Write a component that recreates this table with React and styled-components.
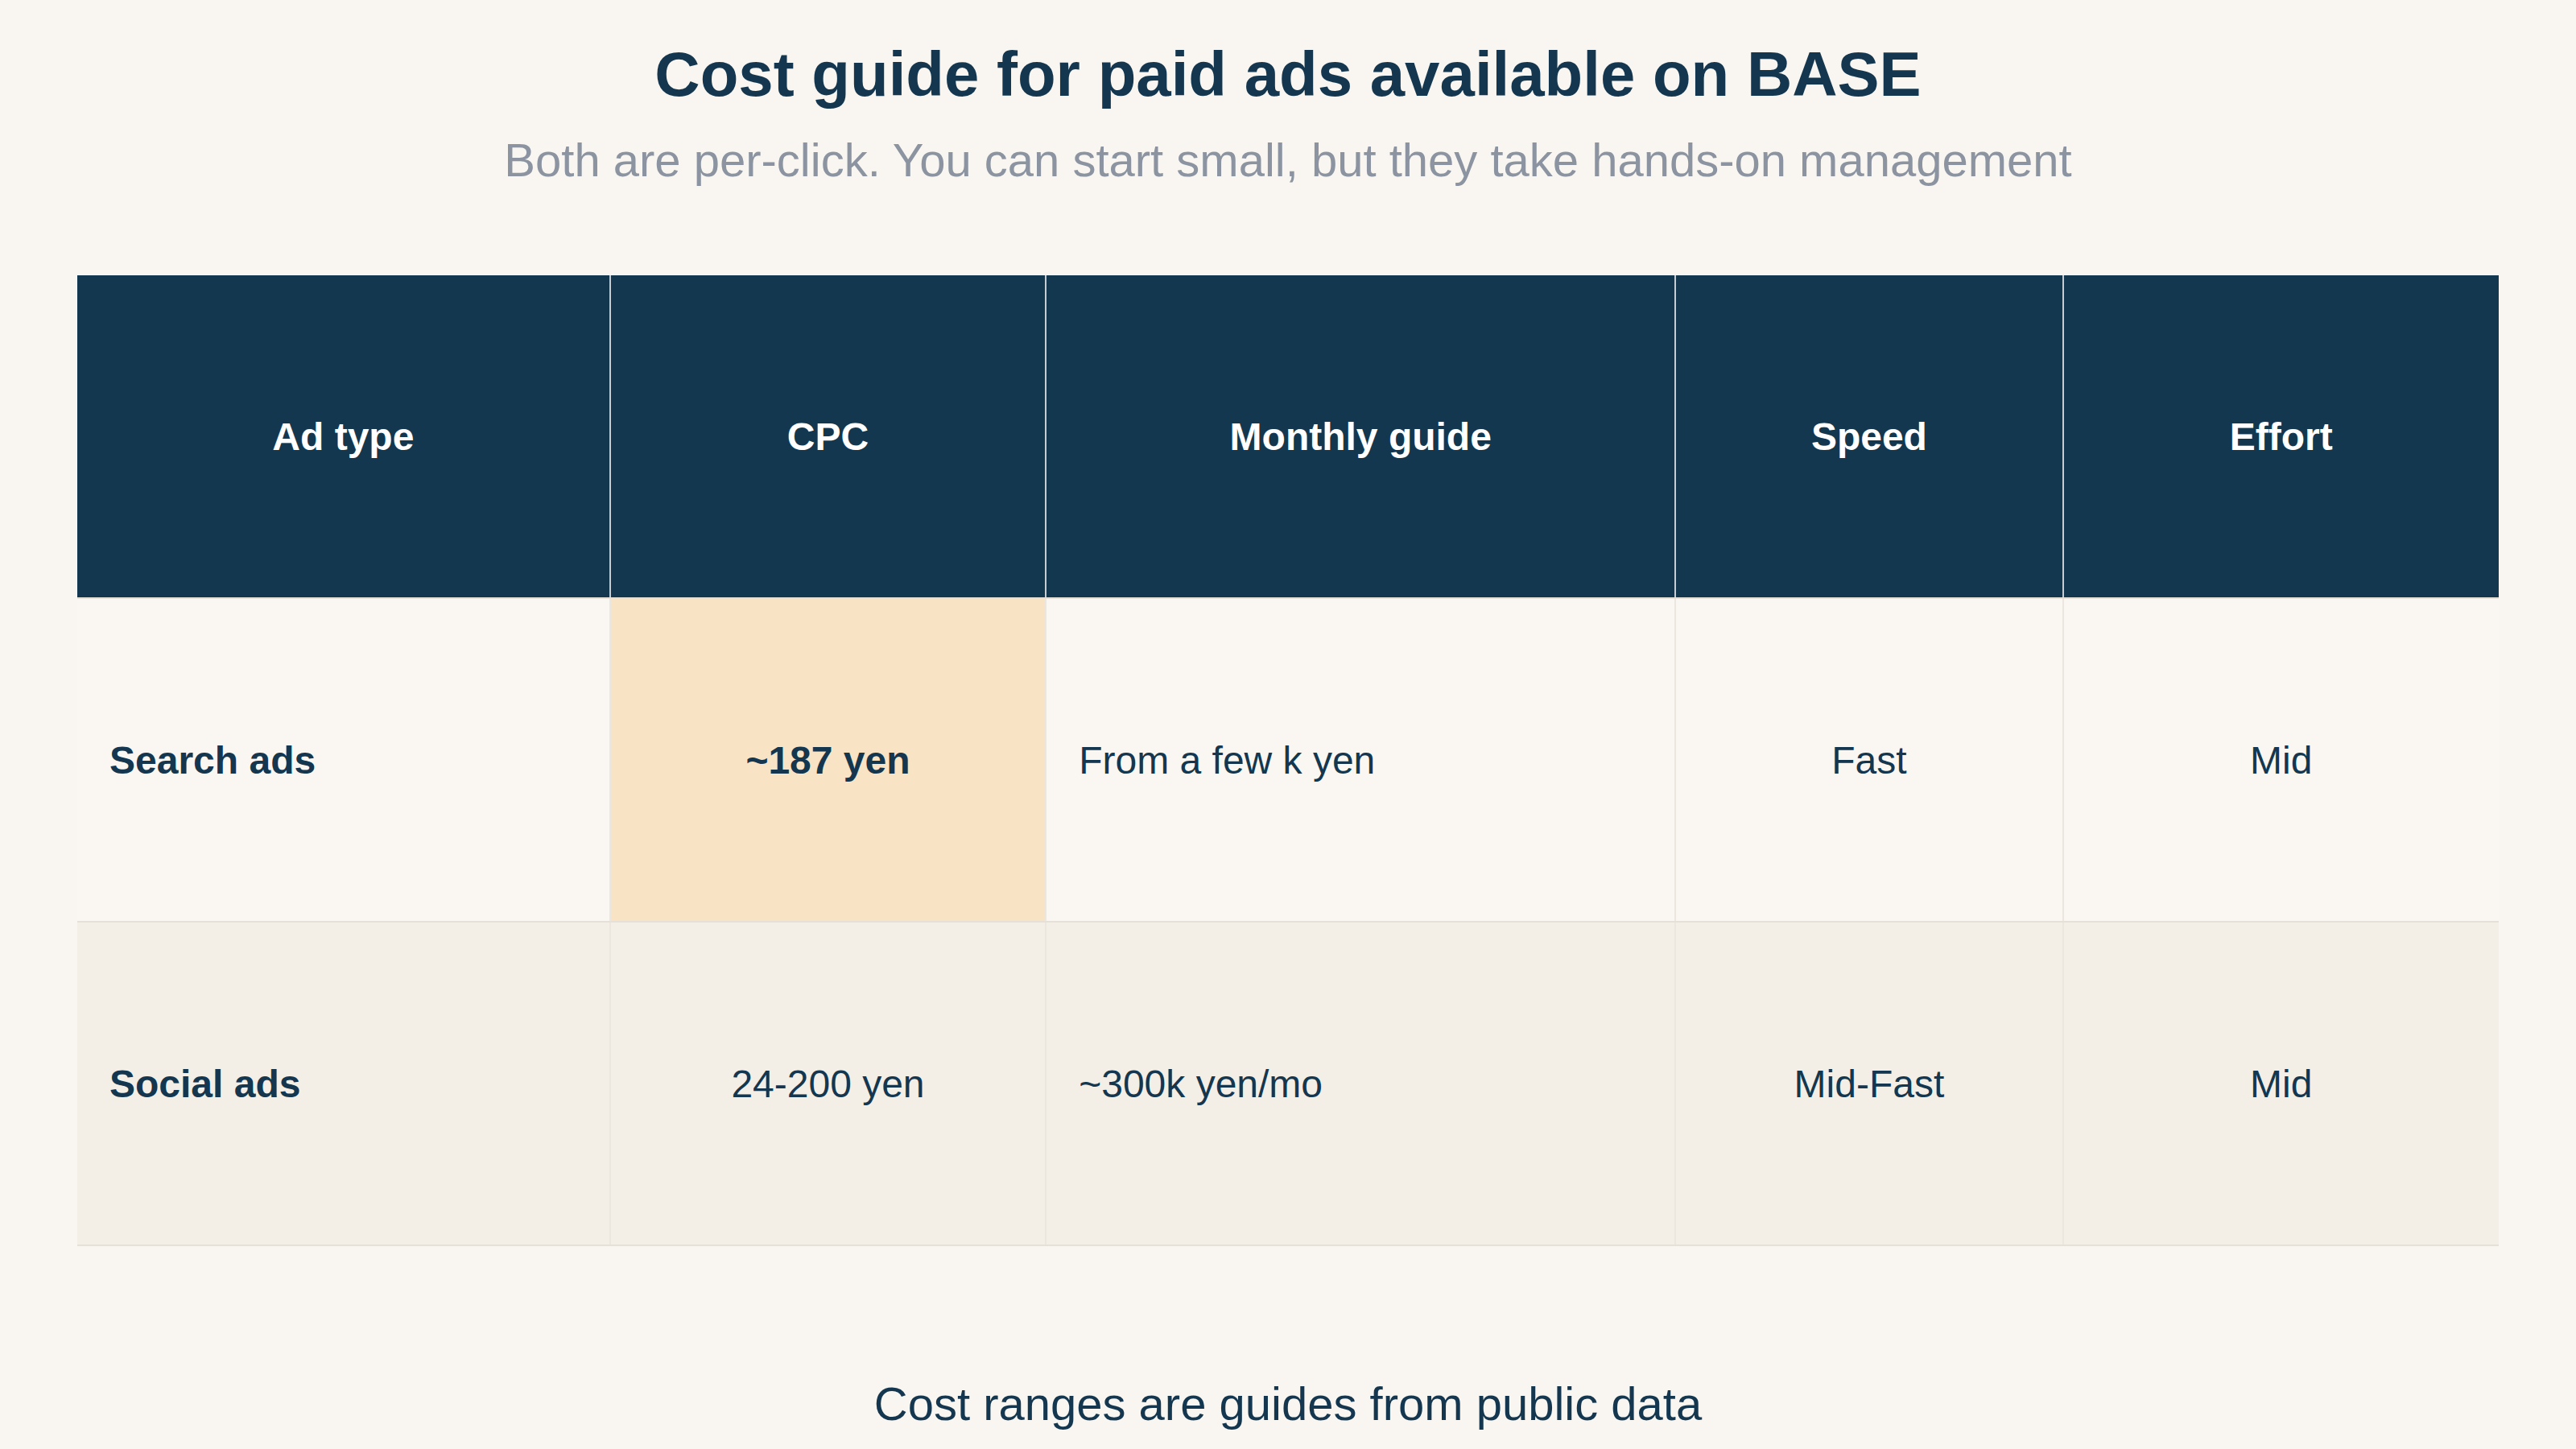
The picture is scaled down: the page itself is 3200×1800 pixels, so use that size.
import React from 'react';
import styled, {createGlobalStyle} from 'styled-components';

const GlobalStyle = createGlobalStyle`
    html, body {
        margin:0;
        padding:0;
        background:#f9f6f1;
    }
    body {
        font-family:"Liberation Sans", Arial, sans-serif;
        color:#14374f;
    }
`

const Page = styled.div`
    width:3200px;
    height:1800px;
    box-sizing:border-box;
    padding:47px 96px 0;
    display:flex;
    flex-direction:column;
    align-items:stretch;
    overflow:hidden;
`

const Title = styled.h1`
    margin:0;
    font-size:78px;
    line-height:90px;
    font-weight:700;
    text-align:center;
    color:#14374f;
`

const Subtitle = styled.p`
    margin:28px 0 0;
    font-size:58px;
    line-height:67px;
    text-align:center;
    color:#8b94a0;
`

const Table = styled.table`
    margin-top:110px;
    width:100%;
    border-collapse:collapse;
    table-layout:fixed;
`

const HeadRow = styled.tr`
    height:401px;
    background:#13374f;
`

const HeadCell = styled.th`
    padding:0 40px;
    font-size:48px;
    font-weight:700;
    color:#ffffff;
    text-align:center;
    vertical-align:middle;
    border-bottom:2px solid #e6e1d8;
    & + & {
        border-left:2px solid #c6cdd2;
    }
`

const Row = styled.tr`
    height:402px;
    background:${p => p.$alt ? '#f3efe7' : '#faf7f2'};
`

const Cell = styled.td`
    padding:0 40px;
    font-size:48px;
    font-weight:${p => p.$bold ? 700 : 400};
    text-align:${p => p.$align || 'center'};
    vertical-align:middle;
    color:#14374f;
    background:${p => p.$highlight ? '#f8e3c4' : 'transparent'};
    border-bottom:2px solid #e6e1d8;
    & + & {
        border-left:2px solid #ebe6de;
    }
`

const Note = styled.p`
    margin:162px 0 0;
    font-size:58px;
    line-height:67px;
    text-align:center;
    color:#14374f;
`

const columns = [
    {label:'Ad type', width:'22%'},
    {label:'CPC', width:'18%'},
    {label:'Monthly guide', width:'26%'},
    {label:'Speed', width:'16%'},
    {label:'Effort', width:'18%'},
]

const rows = [
    {type:'Search ads', cpc:'~187 yen', monthly:'From a few k yen', speed:'Fast', effort:'Mid', best:true},
    {type:'Social ads', cpc:'24-200 yen', monthly:'~300k yen/mo', speed:'Mid-Fast', effort:'Mid'},
]

const App = () => {
    return (
        <>
        <GlobalStyle/>
        <Page>
            <Title>Cost guide for paid ads available on BASE</Title>
            <Subtitle>Both are per-click. You can start small, but they take hands-on management</Subtitle>
            <Table>
                <colgroup>
                    {columns.map(col => <col key={col.label} style={{width:col.width}}/>)}
                </colgroup>
                <thead>
                    <HeadRow>
                        {columns.map(col => <HeadCell key={col.label}>{col.label}</HeadCell>)}
                    </HeadRow>
                </thead>
                <tbody>
                    {rows.map((row, i) => (
                        <Row key={row.type} $alt={i % 2 === 1}>
                            <Cell $align='left' $bold>{row.type}</Cell>
                            <Cell $bold={row.best} $highlight={row.best}>{row.cpc}</Cell>
                            <Cell $align='left'>{row.monthly}</Cell>
                            <Cell>{row.speed}</Cell>
                            <Cell>{row.effort}</Cell>
                        </Row>
                    ))}
                </tbody>
            </Table>
            <Note>Cost ranges are guides from public data</Note>
        </Page>
        </>
    )
}

export default App;
